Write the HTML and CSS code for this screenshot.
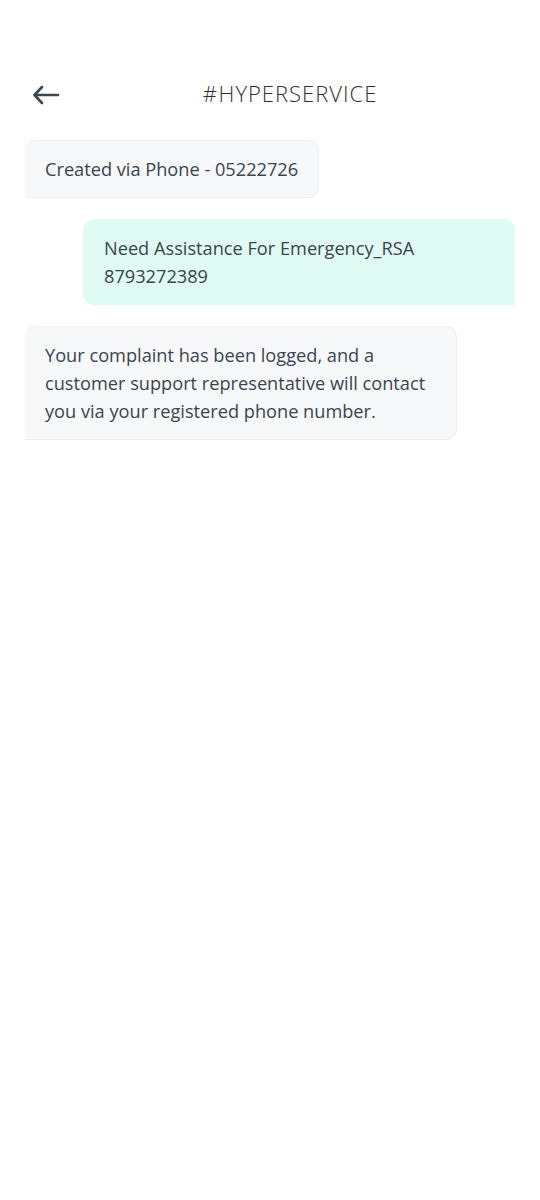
FILE: index.html
```html
<!DOCTYPE html>
<html lang="en">

<head>
    <meta charset="UTF-8">
    <title>#HYPERSERVICE</title>
    <link rel="stylesheet" href="styles.css">
</head>

<body>
    <div class="screen">
        <!-- 상단 헤더 -->
        <div class="header">
            <button class="back-button" aria-label="back">
                <svg width="28" height="20" viewBox="0 0 28 20" fill="none" stroke="#3d4752" stroke-width="2.6"
                    stroke-linecap="round" stroke-linejoin="round">
                    <path d="M26 10H3" />
                    <path d="M10 2L2.5 10L10 18" />
                </svg>
            </button>
            <div class="title"># HYPERSERVICE</div>
        </div>

        <!-- 대화 목록 -->
        <div class="chat">
            <div class="bubble bubble-left">Created via Phone - 05222726</div>
            <div class="bubble bubble-right">Need Assistance For Emergency_RSA<br>8793272389</div>
            <div class="bubble bubble-left wide">Your complaint has been logged, and a<br>customer support
                representative will contact<br>you via your registered phone number.</div>
        </div>
    </div>
</body>

</html>
```

FILE: styles.css
```css
* {
    box-sizing: border-box;
    margin: 0;
    padding: 0;
}

body {
    font-family: 'Open Sans', 'Liberation Sans', sans-serif;
    background-color: #fff;
    color: #3a4450;
}

.screen {
    width: 540px;
    height: 1200px;
    padding-top: 70px;
}

.header {
    position: relative;
    display: flex;
    align-items: center;
    justify-content: center;
    height: 46px;
    padding-left: 40px;
}

.back-button {
    position: absolute;
    left: 32px;
    top: 15px;
    background: none;
    border: none;
    display: flex;
}

.title {
    font-size: 22px;
    font-weight: 300;
    color: #2b2f33;
    letter-spacing: 1px;
    word-spacing: -6px;
}

.chat {
    display: flex;
    flex-direction: column;
    gap: 21px;
    padding: 24px 25px 0 25px;
}

.bubble {
    font-size: 18.2px;
    line-height: 28px;
    padding: 14px 20px;
    border: 1px solid #eceef1;
    border-radius: 11px;
}

/* 상대방 메시지: 왼쪽 아래 모서리만 각짐 */
.bubble-left {
    align-self: flex-start;
    background-color: #f7f8fa;
    border-bottom-left-radius: 0;
    border-left: none;
}

.bubble-left.wide {
    width: 432px;
}

/* 내 메시지: 오른쪽 아래 모서리만 각짐 */
.bubble-right {
    align-self: flex-end;
    width: 432px;
    background-color: #e0fbf4;
    border-color: #e0fbf4;
    border-bottom-right-radius: 0;
}
```
